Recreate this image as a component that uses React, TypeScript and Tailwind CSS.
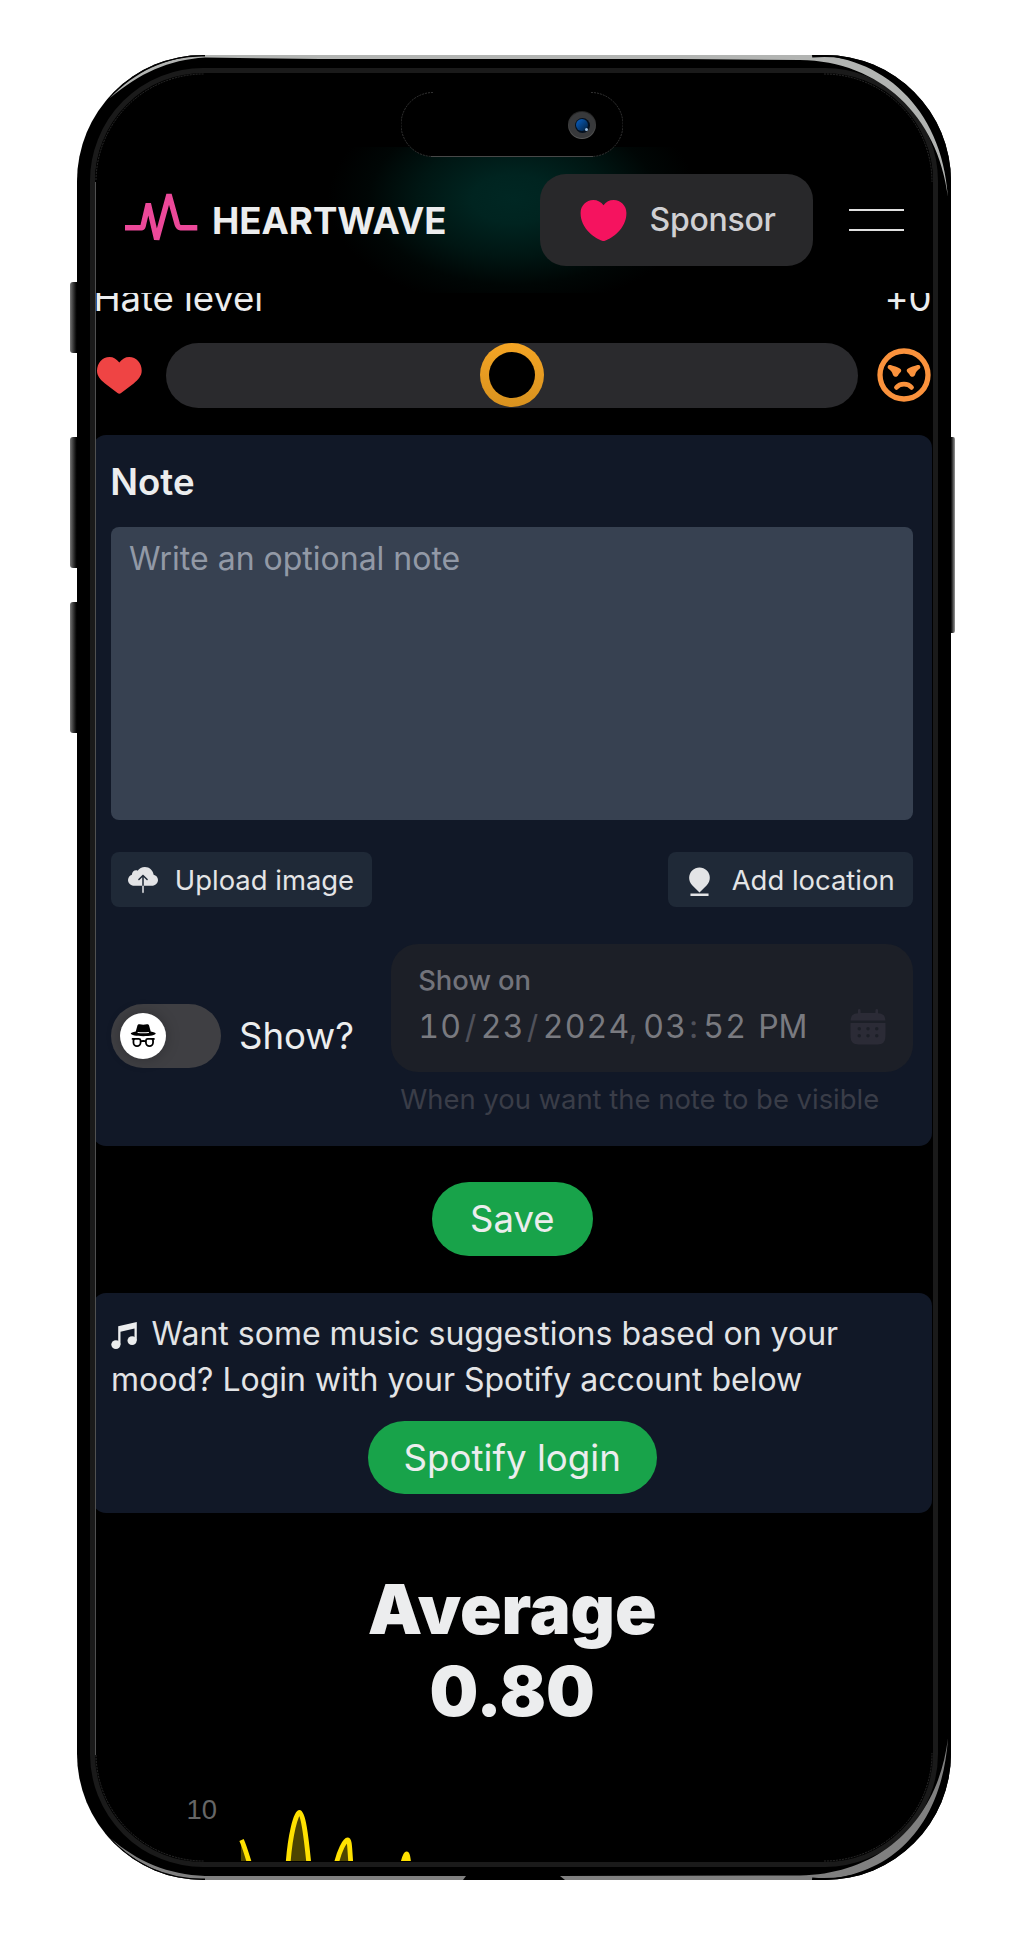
import { BsIncognito } from "react-icons/bs";
import { IoIosCloudUpload } from "react-icons/io";
import { RiMapPin5Fill } from "react-icons/ri";

function PhoneShell() {
  return (
    <svg
      className="pointer-events-none absolute left-0 top-0"
      width="1024"
      height="1935"
      viewBox="0 0 1024 1935"
      fill="none"
    >
      <clipPath id="body">
        <rect x="77" y="55" width="874" height="1825" rx="126" />
      </clipPath>
      <g clipPath="url(#body)">
        {/* top edge shine */}
        <path d="M110 98C135 72 165 57 205 55H810C880 55 942 106 948 197C938 116 880 61 800 60L680 59H320L205 57.500C168 60 140 73 110 98Z" fill="#b2b4b2" />
        <path d="M106 99A126 126 0 0 1 205 55" stroke="#000" strokeWidth="3" />
        <path d="M812 55A126 126 0 0 1 950 185" stroke="#000" strokeWidth="5" />
        {/* bottom edge shine */}
        <path d="M110 1838C138 1866 168 1879 205 1880H463L466 1876H205C168 1874.500 138 1862 110 1838Z" fill="#808080" />
        <path d="M560 1876L565 1880H812C890 1879 942 1828 948 1738C938 1820 882 1874 800 1875.5Z" fill="#808080" />
        <path d="M106 1836A126 126 0 0 0 205 1880" stroke="#000" strokeWidth="3" />
        <path d="M812 1880A126 126 0 0 0 950 1750" stroke="#000" strokeWidth="5" />
      </g>
      {/* glass rim */}
      <path d="M95.5 182V1755" stroke="#505050" />
      <path d="M96 180A108 108 0 0 1 204 74" stroke="#444" strokeWidth=".6" strokeDasharray="2 1" />
      <path d="M824 74A108 108 0 0 1 932 182" stroke="#444" strokeWidth=".6" strokeDasharray="2 1" />
      <path d="M96 1755A108 108 0 0 0 204 1861" stroke="#444" strokeWidth=".6" strokeDasharray="2 1" />
      <path d="M824 1861A108 108 0 0 0 932 1753" stroke="#444" strokeWidth=".6" strokeDasharray="2 1" />
    </svg>
  );
}

function SideButton({ className }: { className: string }) {
  return <div className={`absolute bg-gradient-to-r ${className}`} />;
}

function Island() {
  return (
    <div className="absolute left-[401px] top-[92px] h-[65px] w-[222px] rounded-full bg-black">
      <svg className="absolute inset-0" width="222" height="65" fill="none">
        <path d="M32 .5A32 32 0 0 0 32 64.5" stroke="#555" strokeWidth=".6" strokeDasharray="2 1" />
        <path d="M190 .5A32 32 0 0 1 190 64.5" stroke="#555" strokeWidth=".6" strokeDasharray="2 1" />
        <path d="M30 64.5H192" stroke="#484848" />
      </svg>
      <div className="absolute left-[167px] top-[19px] flex size-[28px] items-center justify-center rounded-full bg-gradient-to-b from-[#222] to-[#5a5a5a]">
        <div className="flex size-[26px] items-center justify-center rounded-full bg-[#38393b]">
          <div className="flex size-[15px] items-center justify-center rounded-full bg-[#04101f]">
            <div className="relative size-[12px] rounded-full bg-gradient-to-br from-[#0a63c9] to-[#03203f]">
              <div className="absolute bottom-0 right-0 size-[3px] rounded-full bg-[#9fc0e0]" />
            </div>
          </div>
        </div>
      </div>
    </div>
  );
}

function Header() {
  return (
    <header className="relative flex h-[146px] shrink-0 items-center overflow-hidden bg-black bg-[radial-gradient(ellipse_185px_110px_at_418px_52px,#002723_0%,#002420_22%,#001613_52%,#000605_78%,#000_100%)] pl-[30px]">
      <svg width="73" height="50" viewBox="125 191 73 50" fill="none" className="-mt-[8px] shrink-0">
        <path
          d="M125 227.7H141.5Q142.6 227.7 143 226.3L148.3 203.5L156.7 239.5L169 194.5L177.3 224.5Q178.3 227.7 180.5 227.7H197.3"
          stroke="#ec4899"
          strokeWidth="5.5"
          strokeLinejoin="bevel"
        />
      </svg>
      <span className="ml-[14px] mt-[1px] w-[327px] shrink-0 text-[36.6px] font-bold leading-[44px] text-[#ecedee]">HEARTWAVE</span>
      <button className="ml-[.5px] flex h-[92px] w-[273px] shrink-0 items-center rounded-[26px] bg-[#28282a] pl-[36.8px]">
        <svg width="55" height="55" viewBox="0 0 24 24" fill="#f5135f">
          <path d="M12.62 20.81c-.34.12-.9.12-1.24 0C8.48 19.82 2 15.69 2 8.69 2 5.6 4.49 3.1 7.56 3.1c1.82 0 3.43.88 4.44 2.24a5.53 5.53 0 0 1 4.44-2.24C19.51 3.1 22 5.6 22 8.69c0 7-6.48 11.12-9.38 12.12Z" />
        </svg>
        <span className="ml-[18.2px] text-[32px] font-medium leading-[46px] tracking-[-0.27px] text-[#d0d0d3]">Sponsor</span>
      </button>
      <button className="ml-[36.5px] flex w-[55px] shrink-0 flex-col gap-[17.5px]" aria-label="Menu">
        <span className="block h-[2.7px] bg-[#e0e0e0]" />
        <span className="block h-[2.7px] bg-[#e0e0e0]" />
      </button>
    </header>
  );
}

function HeartIcon() {
  return (
    <svg width="45" height="37" viewBox="0 0 45 37" fill="#ef4444" className="ml-[4.3px] shrink-0">
      <path d="M22.3 5.5C19.5 2 16.5 0 12.5 0C5.5 0 0 5.8 0 13.8C0 19 3.5 22.8 8 26.5L20.5 36.1Q22.3 37.4 24.1 36.1L36.7 26.5C41 22.8 44.7 19 44.7 13.8C44.7 5.8 39.200 0 32.2 0C28.2 0 25.1 2 22.3 5.5Z" />
    </svg>
  );
}

function AngryIcon() {
  const brow = "M-16.2 -8.8C-15.4 -10.6 -13.500 -10.2 -8.5 -8.4C-5 -7.2 -2.4 -6 -2.8 -4C-3.1 -2.5 -4.8 -2 -5.6 -.2C-6.6 2.4 -9.9 2.5 -11 0C-11.8 -2 -12 -3.500 -14 -5C-16 -6.300 -16.8 -7.300 -16.2 -8.8Z";
  return (
    <svg width="54" height="54" viewBox="-27 -27 54 54" fill="#fb923c" className="ml-[19px] shrink-0">
      <circle r="24" fill="none" stroke="#fb923c" strokeWidth="5.3" />
      <path d={brow} />
      <path d={brow} transform="scale(-1 1)" />
      <path d="M-7.5 12.4C-4 7.900 4 7.900 7.500 12.4" fill="none" stroke="#fb923c" strokeWidth="4.8" strokeLinecap="round" />
    </svg>
  );
}

function MusicIcon() {
  return (
    <svg width="26" height="27" viewBox="0 0 26 27" fill="#ecedee" className="mr-[14.5px] inline-block align-[-4px]">
      <path d="M7.200 4.3L25.800 0V18.500H23.500V6.500L9.500 9.800V22.500H7.200Z" />
      <ellipse cx="4.900" cy="22.600" rx="4.600" ry="4.300" />
      <ellipse cx="21.100" cy="18.600" rx="4.600" ry="4.300" />
    </svg>
  );
}

function HateLevel() {
  return (
    <section>
      <div className="-mt-[18px] flex h-[46px] items-center justify-between text-[36.6px] leading-[46px] tracking-[-0.1px] text-[#ecedee]">
        <span className="ml-[.5px]">Hate level</span>
        <span>+0</span>
      </div>
      <div className="mt-[22.3px] flex h-[64.4px] items-center">
        <HeartIcon />
        <div className="ml-[23.7px] flex h-full w-[692px] shrink-0 items-center justify-center rounded-full bg-[#2a2a2d]">
          <div className="flex size-[64px] items-center justify-center rounded-full bg-gradient-to-b from-[#f5a524] to-[#d8921f]">
            <div className="size-[46px] rounded-full bg-black" />
          </div>
        </div>
        <AngryIcon />
      </div>
    </section>
  );
}

function CalendarIcon() {
  return (
    <svg width="42" height="42" viewBox="0 0 24 24" fill="#2b2b36" className="shrink-0">
      <path d="M7.75 2.5a.75.75 0 0 0-1.5 0v1.58c-1.44.115-2.384.397-3.078 1.092-.695.694-.977 1.639-1.093 3.078h19.842c-.116-1.44-.398-2.384-1.093-3.078-.694-.695-1.639-.977-3.078-1.093V2.5a.75.75 0 0 0-1.5 0v1.513C15.585 4 14.839 4 14 4h-4c-.839 0-1.585 0-2.25.013V2.5Z" />
      <path
        fillRule="evenodd"
        clipRule="evenodd"
        d="M2 12c0-.839 0-1.585.013-2.25h19.974C22 10.415 22 11.161 22 12v2c0 3.771 0 5.657-1.172 6.828C19.657 22 17.771 22 14 22h-4c-3.771 0-5.657 0-6.828-1.172C2 19.657 2 17.771 2 14v-2Zm15 2a1 1 0 1 0 0-2 1 1 0 0 0 0 2Zm0 4a1 1 0 1 0 0-2 1 1 0 0 0 0 2Zm-4-5a1 1 0 1 1-2 0 1 1 0 0 1 2 0Zm0 4a1 1 0 1 1-2 0 1 1 0 0 1 2 0Zm-6-3a1 1 0 1 0 0-2 1 1 0 0 0 0 2Zm0 4a1 1 0 1 0 0-2 1 1 0 0 0 0 2Z"
      />
    </svg>
  );
}

function DateField() {
  return (
    <div className="ml-auto w-[522.5px]">
      <div className="relative h-[128px] rounded-[27px] bg-[#1c1f27] pl-[27.5px] pt-[22.4px]">
        <div className="h-[28px] text-[27.4px] font-medium leading-[28px] tracking-[-0.1px] text-[#72737b]">Show on</div>
        <div className="mt-[12px] flex h-[42px] items-center text-[32px] leading-[42px] tabular-nums tracking-[1.2px] text-[#797a80]">
          <span className="w-[46.5px] shrink-0">10</span>
          <span className="w-[16px] shrink-0 text-[#50515a]">/</span>
          <span className="w-[46px] shrink-0">23</span>
          <span className="w-[16px] shrink-0 text-[#50515a]">/</span>
          <span className="w-[86px] shrink-0">2024</span>
          <span className="w-[14.5px] shrink-0 text-[#50515a]">,</span>
          <span className="w-[46px] shrink-0">03</span>
          <span className="w-[14px] shrink-0 text-[#50515a]">:</span>
          <span className="w-[55px] shrink-0">52</span>
          <span className="w-[88.5px] shrink-0 tracking-[-0.2px]">PM</span>
          <CalendarIcon />
        </div>
      </div>
      <p className="ml-[9.5px] mt-[8px] h-[38px] whitespace-nowrap text-[27.43px] leading-[38px] text-[#3a3d48]">
        When you want the note to be visible
      </p>
    </div>
  );
}

function NotePanel() {
  return (
    <section className="mt-[27.3px] h-[710.7px] rounded-[13px] bg-[#111827] px-[18.3px] pt-[18.3px]">
      <h2 className="-ml-[1px] h-[56px] pt-[1px] text-[36.6px] font-semibold leading-[56px] text-[#ecedee]">Note</h2>
      <div className="mt-[17.7px] h-[293px] rounded-[8px] bg-[#374151] pl-[17.8px] pt-[9.4px] text-[32px] leading-[46px] text-[#9299a6]">
        Write an optional note
      </div>
      <div className="mt-[32px] flex justify-between text-[27.43px] leading-[36px] text-[#e3e4e6]">
        <button className="flex h-[55.3px] w-[261px] items-center rounded-[8px] bg-[#1f2937] pl-[17px]">
          <IoIosCloudUpload size={30} />
          <span className="ml-[16.5px]">Upload image</span>
        </button>
        <button className="flex h-[55.3px] w-[245px] items-center rounded-[8px] bg-[#1f2937] pl-[16px]">
          <RiMapPin5Fill size={31} className="mt-[2px]" />
          <span className="ml-[16.5px]">Add location</span>
        </button>
      </div>
      <div className="mt-[36.5px] flex">
        <div className="mt-[60px] flex h-[64px] items-center">
          <div className="flex h-[64px] w-[110px] items-center rounded-full bg-[#3f3f43] pl-[9px]">
            <div className="flex size-[46px] items-center justify-center rounded-full bg-white text-black shadow-[0_0_14px_rgba(0,0,0,0.25)]">
              <BsIncognito size={28.5} />
            </div>
          </div>
          <span className="ml-[17.7px] text-[36.6px] leading-[46px] text-[#ecedee]">Show?</span>
        </div>
        <DateField />
      </div>
    </section>
  );
}

function MusicPanel() {
  return (
    <section className="mt-[37px] h-[220px] rounded-[13px] bg-[#111827] px-[18px] pt-[18.4px]">
      <p className="whitespace-nowrap text-[32.03px] leading-[46px] text-[#e3e4e6]">
        <MusicIcon />
        Want some music suggestions based on your
        <br />
        mood? Login with your Spotify account below
      </p>
      <button className="mx-auto mt-[18.1px] flex h-[73.3px] w-[289px] items-center justify-center rounded-full bg-[#18a34a] text-[36.7px] text-[#ecedee]">
        Spotify login
      </button>
    </section>
  );
}

function MoodChart() {
  return (
    <svg width="838" height="70" viewBox="93 1792 838 70" className="mt-[58.5px] block">
      <text x="186.500" y="1820" fill="#666" fontSize="27.4" fontFamily="Liberation Sans, Arial, sans-serif">10</text>
      <g fill="#4d4400">
        <path d="M241 1841L251 1864H241Z" />
        <path d="M288 1864C290 1840 296 1814 300 1814S308 1836 310 1864Z" />
        <path d="M337 1864C340 1850 345 1841 348 1841S351 1852 352 1864Z" />
      </g>
      <g fill="none" stroke="#ffe100" strokeWidth="4.8">
        <path d="M241.5 1841C244 1846 246 1853 250 1866" />
        <path d="M288 1866C290 1836 296 1813.500 299.500 1813.500S306 1836 309 1866" />
        <path d="M336 1866C339 1852 345 1841 347.500 1841S349.500 1850 351 1866" />
        <path d="M402.500 1866C404 1859 405.500 1855 406.500 1855S408 1858 409 1866" />
      </g>
    </svg>
  );
}

export default function App() {
  return (
    <div className="relative h-[1935px] w-[1024px] overflow-hidden bg-white px-[77px] pt-[55px] font-['Inter',sans-serif]">
      <SideButton className="left-[70px] top-[282px] h-[71px] w-[8px] rounded-l-[3px] from-[#777] via-[#2c2c2c] to-black" />
      <SideButton className="left-[70px] top-[437px] h-[131px] w-[8px] rounded-l-[3px] from-[#777] via-[#2c2c2c] to-black" />
      <SideButton className="left-[70px] top-[602px] h-[131px] w-[8px] rounded-l-[3px] from-[#777] via-[#2c2c2c] to-black" />
      <SideButton className="left-[950px] top-[437px] h-[196px] w-[5px] rounded-r-[2px] from-black via-[#3a3a3a] to-[#999]" />
      <div className="relative h-[1825px] w-[874px] rounded-[126px] bg-black p-[13px]">
        <div className="h-[1799px] w-[848px] overflow-hidden rounded-[113px] border-[5px] border-[#1a1a1a] bg-black">
          <div className="h-[1789px] overflow-hidden rounded-[108px] pt-[74px]">
            <Header />
            <main className="-ml-[2px] h-[1568.5px] w-[838.5px] overflow-hidden">
              <HateLevel />
              <NotePanel />
              <div className="mt-[36.5px] flex justify-center">
                <button className="h-[73.5px] w-[160.5px] rounded-full bg-[#18a34a] text-[36.5px] text-[#ecedee]">Save</button>
              </div>
              <MusicPanel />
              <div className="mt-[55.5px] text-center text-[68.7px] font-black leading-[82.3px] text-[#ecedee]">
                <div>Average</div>
                <div>0.80</div>
              </div>
              <MoodChart />
            </main>
          </div>
        </div>
      </div>
      <PhoneShell />
      <Island />
    </div>
  );
}
